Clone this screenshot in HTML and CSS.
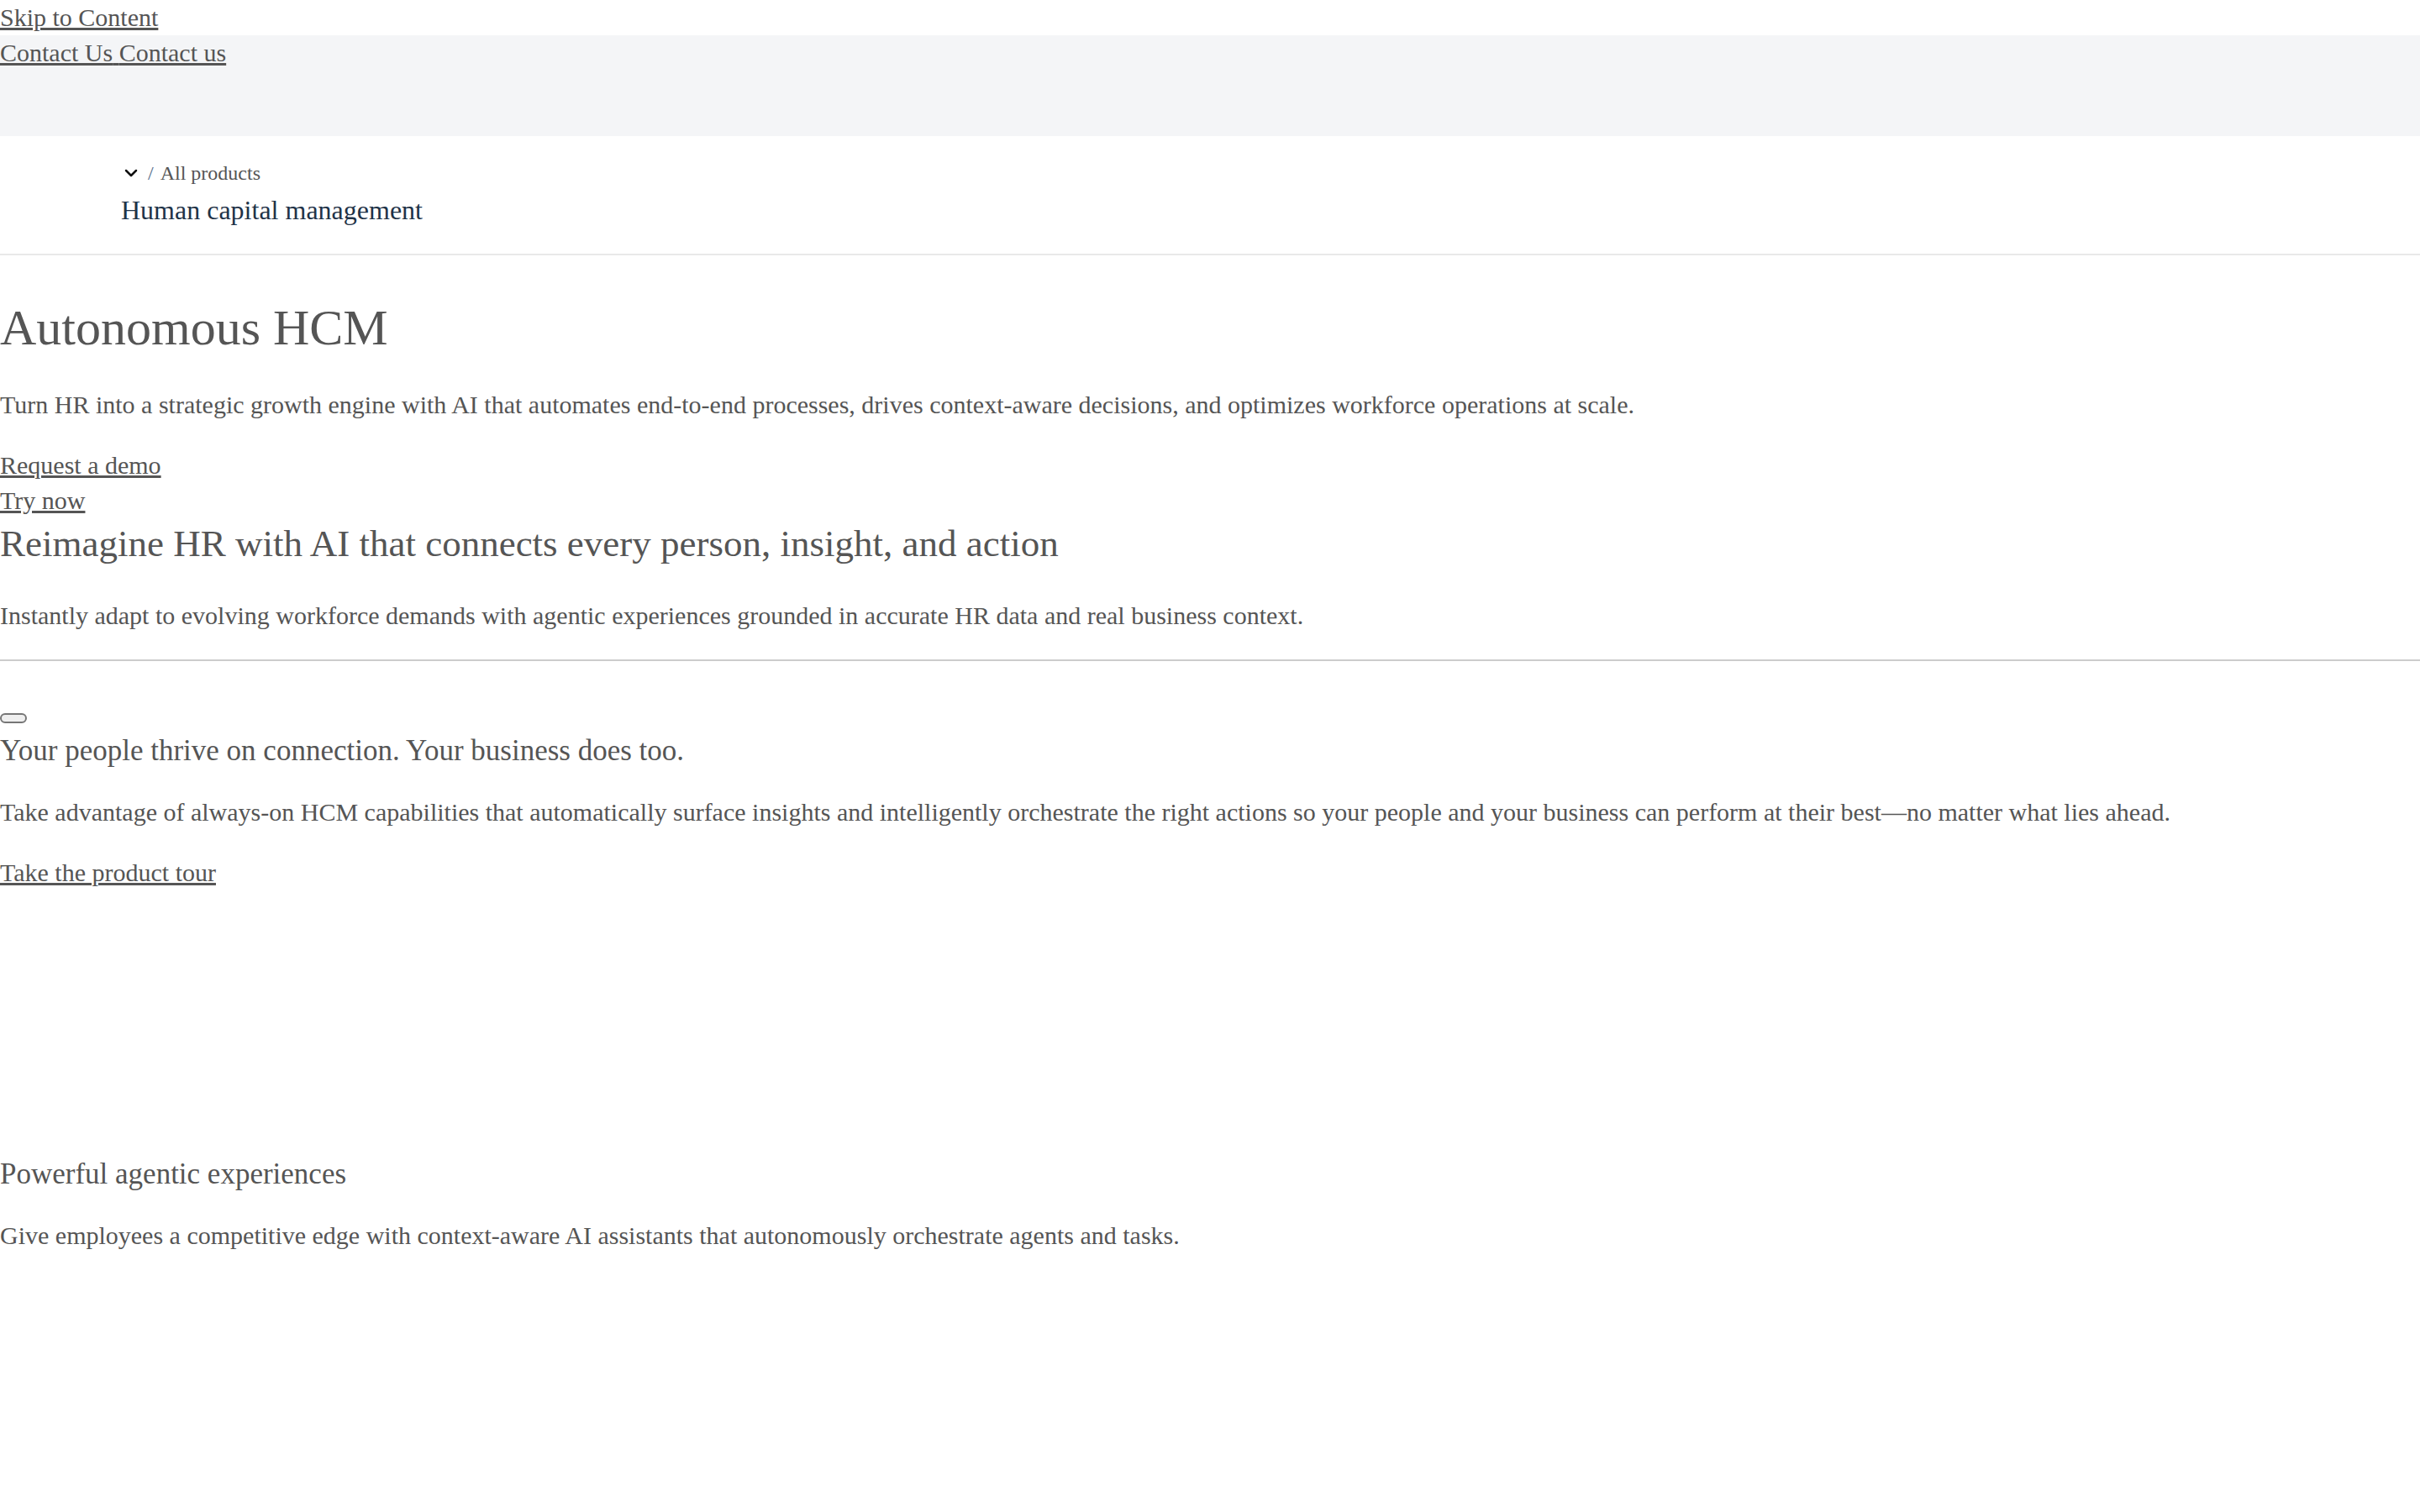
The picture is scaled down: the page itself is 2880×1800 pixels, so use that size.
FILE: index.html
```html
<!DOCTYPE html>
<html lang="en">
<head>
    <meta charset="UTF-8">
    <meta name="viewport" content="width=device-width, initial-scale=1.0">
    <title>Autonomous HCM</title>
    <link rel="stylesheet" href="styles.css">
</head>
<body>

<a class="skip-link" href="#main">Skip to Content</a>

<div class="contact-bar">
    <a href="#"><span>Contact Us</span> <span>Contact us</span></a>
</div>

<div class="product-nav">
    <div class="crumbs">
        <svg viewBox="0 0 24 24" aria-hidden="true">
            <path d="M6 9 L12 15 L18 9" fill="none" stroke="#111" stroke-width="2.5" stroke-linecap="round" stroke-linejoin="round"/>
        </svg>
        <span class="crumb-sep">/</span>
        <span class="crumb">All products</span>
    </div>
    <p class="product-title">Human capital management</p>
</div>

<main id="main">
    <section class="hero">
        <h1>Autonomous HCM</h1>
        <p>Turn HR into a strategic growth engine with AI that automates end-to-end processes, drives context-aware decisions, and optimizes workforce operations at scale.</p>
        <div class="hero-links">
            <a href="#">Request a demo</a>
            <a href="#">Try now</a>
        </div>
    </section>

    <section class="intro">
        <h2>Reimagine HR with AI that connects every person, insight, and action</h2>
        <p>Instantly adapt to evolving workforce demands with agentic experiences grounded in accurate HR data and real business context.</p>
    </section>

    <hr>

    <section class="tour">
        <button class="toggle" type="button" aria-label="Pause"></button>
        <h3>Your people thrive on connection. Your business does too.</h3>
        <p>Take advantage of always-on HCM capabilities that automatically surface insights and intelligently orchestrate the right actions so your people and your business can perform at their best—no matter what lies ahead.</p>
        <p class="tour-link"><a href="#">Take the product tour</a></p>
        <!-- product image goes here -->
        <div class="tour-media"></div>
    </section>

    <section class="feature">
        <h3>Powerful agentic experiences</h3>
        <p>Give employees a competitive edge with context-aware AI assistants that autonomously orchestrate agents and tasks.</p>
    </section>
</main>

</body>
</html>
```

FILE: styles.css
```css
body {
    margin: 0;
    font-family: "Liberation Serif", "Times New Roman", serif;
    font-size: 30px;
    line-height: 42px;
    color: #555;
    background-color: #fff;
}

a {
    color: #555;
}

h1,
h2,
h3 {
    font-weight: normal;
}

.skip-link {
    display: block;
    width: max-content;
}

.contact-bar {
    background-color: #f4f5f7;
    height: 120px;
}

.product-nav {
    padding: 27px 0 29px 144px;
    border-bottom: 2px solid #e9e9e9;
}

.crumbs {
    display: flex;
    align-items: center;
    gap: 8px;
    font-size: 24px;
    line-height: 34px;
    margin-bottom: 5px;
}

.crumbs svg {
    width: 24px;
    height: 24px;
}

.crumb-sep {
    color: #56708c;
}

.product-title {
    margin: 0;
    font-size: 32px;
    line-height: 45px;
    color: #1f3348;
}

main {
    padding-top: 16px;
}

.hero h1 {
    font-size: 60px;
    line-height: 60px;
    margin: 40px 0 41px;
}

.hero p {
    margin: 0 0 30px;
}

.hero-links a {
    display: block;
    width: max-content;
}

.intro h2 {
    font-size: 45px;
    line-height: 61px;
    margin: 0 0 34px;
}

.intro p {
    margin: 0;
}

hr {
    height: 0;
    border: 0;
    border-top: 2px solid #ccc;
    margin: 31px 0 62px;
}

.toggle {
    display: block;
    width: 32px;
    height: 12px;
    padding: 0;
    border: 2px solid #767676;
    border-radius: 6px;
    background-color: #efefef;
}

.tour h3,
.feature h3 {
    font-size: 35px;
    line-height: 35px;
    margin: 15px 0 35px;
}

.tour p {
    margin: 0 0 30px;
}

.tour .tour-link {
    margin: 0;
}

.tour-media {
    height: 320px;
}

.feature h3 {
    margin-top: 0;
}

.feature p {
    margin: 0;
}
```
